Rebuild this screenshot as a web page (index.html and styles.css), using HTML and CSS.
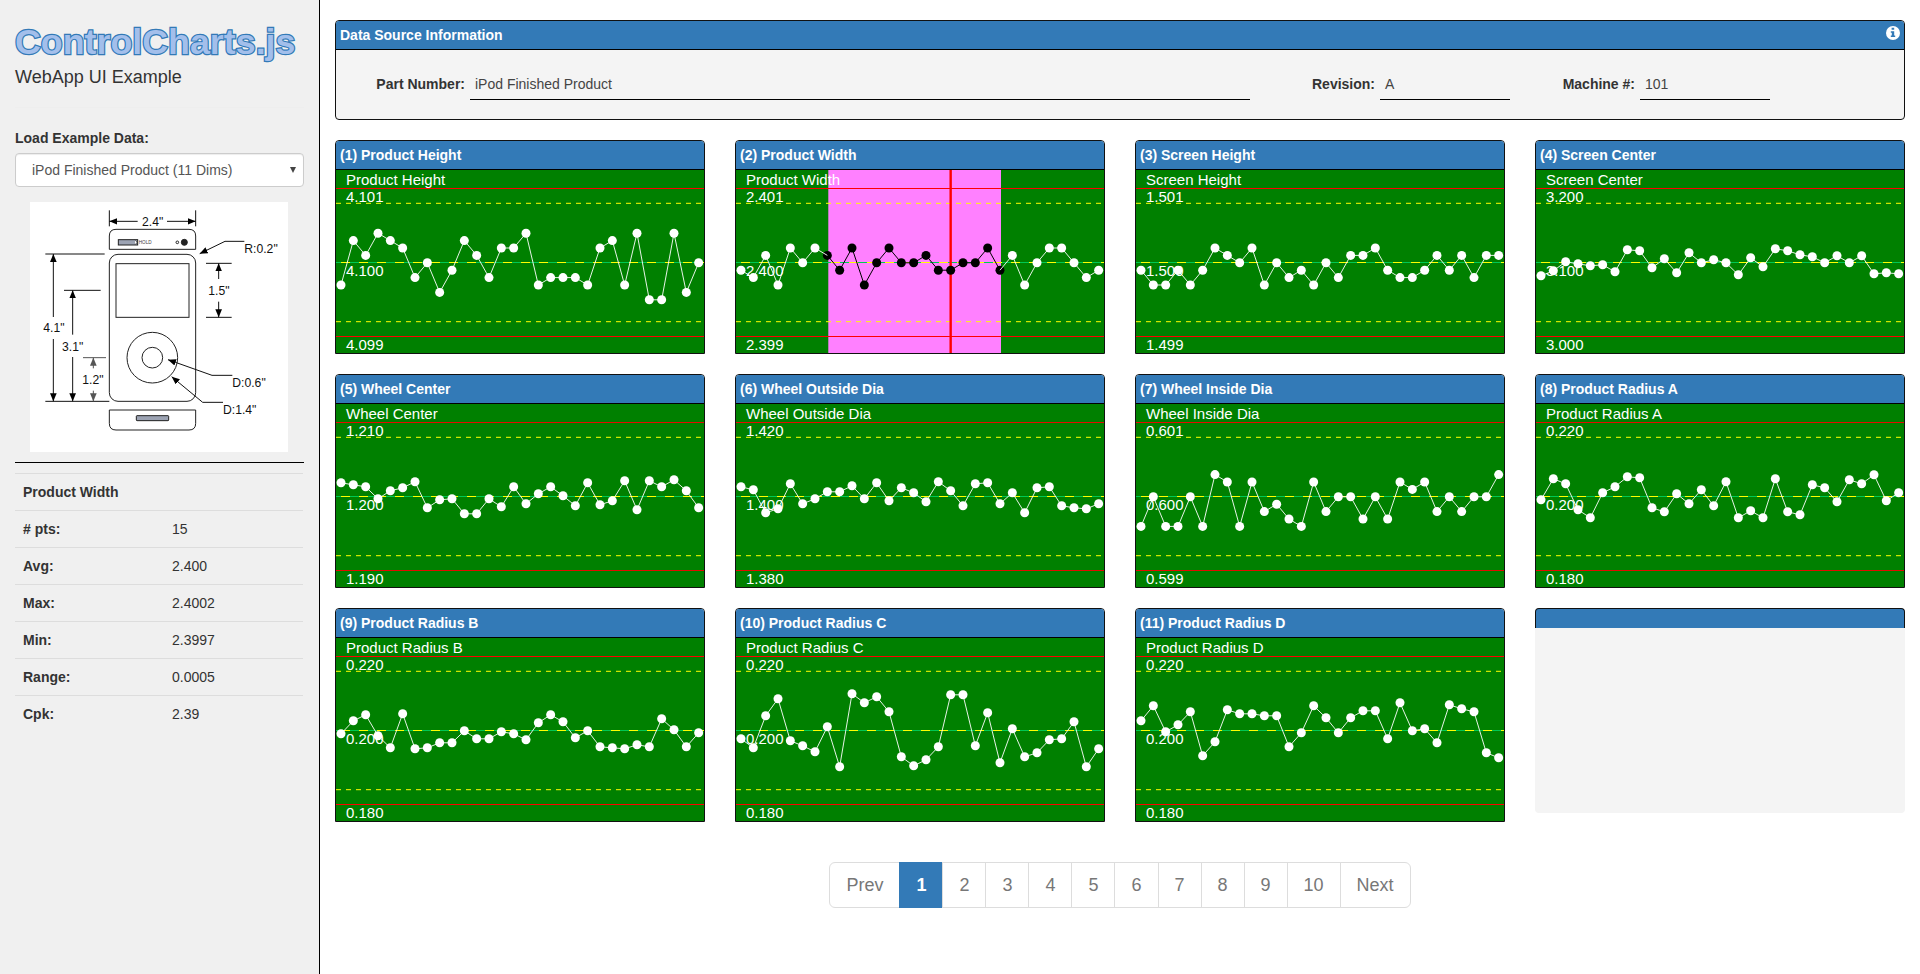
FILE: index.html
```html
<!DOCTYPE html>
<html lang="en">
<head>
<meta charset="utf-8">
<title>ControlCharts.js</title>
<link rel="stylesheet" href="styles.css">
</head>
<body>
<div class="app">
  <aside class="sidebar">
    <h1 class="logo">ControlCharts.js</h1>
    <div class="subtitle">WebApp UI Example</div>
    <hr class="divider">
    <label class="field-label">Load Example Data:</label>
    <div class="select"><span>iPod Finished Product (11 Dims)</span>
      <svg class="caret" viewBox="0 0 6 6"><path d="M0 0H6L3 6Z"/></svg>
    </div>
    <svg class="drawing" viewBox="90 36 774 750">
      <defs>
        <marker id="arrow" viewBox="0 0 24 20" refX="24" refY="10" markerWidth="24" markerHeight="20" markerUnits="userSpaceOnUse" orient="auto-start-reverse"><path d="M24 10L0 0V20Z"/></marker>
        <marker id="arrow-gray" viewBox="0 0 24 20" refX="24" refY="10" markerWidth="24" markerHeight="20" markerUnits="userSpaceOnUse" orient="auto-start-reverse"><path d="M24 10L0 0V20Z" fill="#555"/></marker>
      </defs>
      <rect x="90" y="36" width="774" height="750" fill="#fff"/>
      <g class="outline">
        <path d="M328 178V138Q328 118 348 118H567Q587 118 587 138V178Z"/>
        <rect x="328" y="193" width="259" height="441" rx="26"/>
        <rect x="348" y="221" width="219" height="161"/>
        <circle cx="457" cy="503" r="76"/>
        <circle cx="457" cy="503" r="31"/>
        <path d="M328 660H587V700Q587 720 567 720H348Q328 720 328 700Z"/>
        <rect x="355" y="149" width="58" height="16" fill="#9ca3b3"/>
        <path d="M405 149L411 157L405 165" stroke-width="2"/>
        <rect x="409" y="677" width="97" height="15" rx="2" fill="#9ca3b3"/>
        <circle cx="532" cy="157" r="4"/>
        <circle cx="553" cy="157" r="9" fill="#222"/>
      </g>
      <g class="dims">
        <path d="M328 61V109M587 61V109M136 192H314M192 301H302M136 634H328M618 220H695M618 382H695"/>
        <path d="M413 94H328" marker-end="url(#arrow)"/>
        <path d="M501 94H587" marker-end="url(#arrow)"/>
        <path d="M160 381V192" marker-end="url(#arrow)"/>
        <path d="M160 447V634" marker-end="url(#arrow)"/>
        <path d="M218 434V301" marker-end="url(#arrow)"/>
        <path d="M218 501V634" marker-end="url(#arrow)"/>
        <path d="M656 267V220" marker-end="url(#arrow)"/>
        <path d="M656 335V382" marker-end="url(#arrow)"/>
        <path d="M733 154H675L599 191" marker-end="url(#arrow)"/>
        <path d="M697 556H636L504 509" marker-end="url(#arrow)"/>
        <path d="M669 637H608L515 560" marker-end="url(#arrow)"/>
      </g>
      <g class="dims dims-gray">
        <path d="M249 503H318"/>
        <path d="M280 535V503" marker-end="url(#arrow-gray)"/>
        <path d="M280 602V634" marker-end="url(#arrow-gray)"/>
      </g>
      <g class="dim-text">
        <text x="426" y="108">2.4"</text>
        <text x="733" y="189">R:0.2"</text>
        <text x="625" y="315">1.5"</text>
        <text x="130" y="426">4.1"</text>
        <text x="186" y="483">3.1"</text>
        <text x="247" y="581">1.2"</text>
        <text x="697" y="590">D:0.6"</text>
        <text x="669" y="672">D:1.4"</text>
        <text x="416" y="163" class="hold">HOLD</text>
      </g>
    </svg>
    <div class="rule"></div>
    <table class="stats">
      <colgroup><col class="stat-name"><col></colgroup>
      <tr><th colspan="2">Product Width</th></tr>
      <tr><th># pts:</th><td>15</td></tr>
      <tr><th>Avg:</th><td>2.400</td></tr>
      <tr><th>Max:</th><td>2.4002</td></tr>
      <tr><th>Min:</th><td>2.3997</td></tr>
      <tr><th>Range:</th><td>0.0005</td></tr>
      <tr><th>Cpk:</th><td>2.39</td></tr>
    </table>
  </aside>
  <main class="main">
    <section class="panel">
      <header class="panel-head"><span>Data Source Information</span>
        <svg class="info" viewBox="0 0 14 14"><circle cx="7" cy="7" r="7" fill="#fff"/><path d="M5.6 1.8h2.6v2H5.6zM4.8 5.2h3.4v4.2h1v1.6H4.8V9.4h1V6.7h-1z" fill="#337ab7"/></svg>
      </header>
      <div class="source">
        <div class="pair pair-part"><b>Part Number:</b><span class="value">iPod Finished Product</span></div>
        <div class="pair pair-revision"><b>Revision:</b><span class="value">A</span></div>
        <div class="pair pair-machine"><b>Machine #:</b><span class="value">101</span></div>
      </div>
    </section>
    <div class="charts" id="charts"></div>
    <nav class="pager">
      <a>Prev</a><a class="active">1</a><a>2</a><a>3</a><a>4</a><a>5</a><a>6</a><a>7</a><a>8</a><a>9</a><a>10</a><a>Next</a>
    </nav>
  </main>
</div>
<script src="charts.js"></script>
</body>
</html>
```

FILE: styles.css
```css
* { box-sizing: border-box; }
body {
  margin: 0;
  font: 14px/20px "Liberation Sans", Arial, sans-serif;
  color: #333;
  background: #fff;
}
.app { display: flex; height: 974px; overflow: hidden; }
.sidebar {
  width: 320px;
  flex: none;
  padding: 22px 15px 0;
  background: #f0f0f0;
  border-right: 1px solid #000;
}
.logo {
  margin: 0;
  font-size: 35.8px;
  line-height: 40px;
  font-weight: bold;
  color: #a3bfeb;
  -webkit-text-stroke: 2.4px #337ab7;
  paint-order: stroke fill;
  text-shadow: 0 0 1px #337ab7;
  white-space: nowrap;
}
.subtitle { margin-top: 5px; font-size: 18px; line-height: 20px; }
.divider { margin: 20px 0; border: 0; border-top: 1px solid #eee; }
.field-label { display: block; margin-bottom: 5px; font-weight: bold; }
.select {
  display: flex;
  align-items: center;
  justify-content: space-between;
  height: 34px;
  padding: 0 7px 0 16px;
  border: 1px solid #ccc;
  border-radius: 4px;
  background: #fff;
  color: #555;
  box-shadow: inset 0 1px 1px rgba(0, 0, 0, .075);
}
.caret { width: 6px; height: 6px; fill: #444; }
.drawing { display: block; width: 258px; height: 250px; margin: 15px 0 0 15px; }
.outline { fill: #fff; stroke: #222; stroke-width: 3; }
.dims { fill: none; stroke: #111; stroke-width: 3; }
.dims-gray { stroke: #555; }
.dim-text { font-size: 36.5px; fill: #111; }
.hold { font-size: 14px; fill: #444; }
.rule { margin-top: 10px; border-top: 1px solid #000; }
.stats { width: 288px; margin-top: 10px; border-collapse: collapse; table-layout: fixed; }
.stats th, .stats td { height: 37px; padding: 8px; border-top: 1px solid #ddd; text-align: left; line-height: 20px; }
.stat-name { width: 149px; }
.main { flex: 1; padding: 20px 15px 0; }
.panel { border: 1px solid #111; border-radius: 4px; overflow: hidden; background: #f4f4f4; }
.panel-head {
  display: flex;
  justify-content: space-between;
  height: 29px;
  padding: 4px;
  border-bottom: 1px solid #000;
  background: #337ab7;
  color: #fff;
  font-weight: bold;
}
.info { width: 14px; height: 14px; margin-top: 1px; }
.source { display: flex; height: 69px; padding: 17px 0 0 40px; }
.pair { display: flex; gap: 5px; line-height: 34px; height: 33px; }
.pair b { flex: none; text-align: right; }
.value { flex: 1; padding-left: 5px; color: #444; border-bottom: 1px solid #000; }
.pair-part { width: 874px; }
.pair-revision { width: 200px; margin-left: 60px; }
.pair-machine { width: 210px; margin-left: 50px; }
.pair-part b { width: 89px; }
.pair-revision b { width: 65px; }
.pair-machine b { width: 75px; }
.charts {
  display: grid;
  grid-template-columns: repeat(4, 370px);
  gap: 20px 30px;
  margin-top: 20px;
}
.charts .panel { height: 214px; border-radius: 4px 4px 0 0; }
.chart { display: block; width: 368px; height: 183px; background: #008000; }
.limit { stroke: #f00; stroke-width: 1.1; }
.limit-soft { stroke: #e60a00; stroke-width: 1; }
.warn { stroke: #ff0; stroke-dasharray: 5 5; }
.mean { stroke: #00c853; }
.mean-dash { stroke: #ff0; stroke-dasharray: 9 9; }
.label { fill: #fff; font-size: 15px; }
.trace { fill: none; stroke: #fff; stroke-opacity: .9; }
.dot { fill: #fff; }
.trace-selected { fill: none; stroke: #000; }
.dot-selected { fill: #000; }
.selection { fill: #ff80ff; }
.cursor { stroke: #f00; stroke-width: 2.4; }
.empty-head {
  height: 20px;
  border: 1px solid #111;
  border-bottom: 0;
  border-radius: 4px 4px 0 0;
  background: #337ab7;
}
.empty-body { height: 185px; border-radius: 0 0 4px 4px; background: #f4f4f4; }
.pager { display: flex; width: max-content; margin: 40px auto 0; font-size: 18px; line-height: 24px; color: #777; }
.pager a { padding: 10px 16px; border: 1px solid #ddd; margin-left: -1px; background: #fff; }
.pager a:first-child { margin-left: 0; border-radius: 6px 0 0 6px; }
.pager a:last-child { border-radius: 0 6px 6px 0; }
.pager .active { border-color: #337ab7; background: #337ab7; color: #fff; font-weight: bold; }
```

FILE: charts.js
```js
// Each chart: name, axis labels (upper, target, lower), pixels per step, offsets from target in steps.
const COARSE = 7.4, FINE = 1 / 3;
const charts = [
  ["Product Height", ["4.101", "4.100", "4.099"], COARSE, [-3,3,1,4,3,2,-2,0,-4,-1,3,1,-2,2,2,4,-3,-2,-2,-2,-3,2,3,-3,4,-5,-5,4,-4,0]],
  ["Product Width", ["2.401", "2.400", "2.399"], COARSE, [-1,-2,1,-3,2,0,2,1,-1,2,-3,0,2,0,0,1,-1,-1,0,0,2,-1,1,-3,0,2,2,0,-2,-1], [7, 21, 17]],
  ["Screen Height", ["1.501", "1.500", "1.499"], COARSE, [-1,-3,-3,-1,-3,-1,2,1,0,2,-3,0,-2,-1,-3,0,-2,1,1,2,-1,-2,-2,-1,1,-1,1,-2,1,1]],
  ["Screen Center", ["3.200", "3.100", "3.000"], FINE, [-39,-24,3,-3,-9,-6,-27,39,36,-15,12,-30,30,0,9,0,-36,15,-12,42,36,24,18,0,21,0,21,-33,-30,-33]],
  ["Wheel Center", ["1.210", "1.200", "1.190"], FINE, [42,36,30,-6,18,27,45,-33,-9,-6,-51,-51,-6,-30,30,-21,9,30,3,-27,42,-24,-12,48,-39,48,30,51,18,-33]],
  ["Wheel Outside Dia", ["1.420", "1.400", "1.380"], FINE, [30,21,-48,-36,39,-21,-6,15,15,33,-6,42,-12,27,12,-15,45,18,-27,39,42,-21,12,-48,27,30,-27,-33,-36,-21]],
  ["Wheel Inside Dia", ["0.601", "0.600", "0.599"], COARSE, [-4,0,-4,-4,0,-4,3,2,-4,2,-2,-1,-3,-4,2,-2,0,0,-3,0,-3,2,1,2,-2,0,-2,0,0,3]],
  ["Product Radius A", ["0.220", "0.200", "0.180"], FINE, [-9,54,39,-39,-63,12,30,60,57,-33,-45,9,-21,21,-27,45,-63,-42,-63,54,-45,-54,36,27,-15,51,39,66,-12,12]],
  ["Product Radius B", ["0.220", "0.200", "0.180"], FINE, [-9,30,48,-15,-51,51,-54,-51,-36,-36,0,-24,-24,-3,-9,-27,24,48,27,-21,0,-48,-51,-54,-42,-48,36,3,-48,-6]],
  ["Product Radius C", ["0.220", "0.200", "0.180"], FINE, [-24,-51,45,96,-30,-45,-63,12,-108,111,84,102,57,-78,-105,-87,-48,108,108,-45,54,-96,6,-78,-66,-27,-24,27,-108,-54]],
  ["Product Radius D", ["0.220", "0.200", "0.180"], FINE, [30,75,-3,18,57,-75,-33,63,51,51,45,45,-48,-6,75,39,-6,39,60,60,-24,84,0,6,-36,78,66,57,-66,-81]]
];

const hline = (y, cls) => `<line class="${cls}" x1="0" x2="368" y1="${y}" y2="${y}"/>`;
const path = (pts, cls) => pts.length ? `<polyline class="${cls}" points="${pts.map(p => p.join()).join(" ")}"/>` : "";
const dots = (pts, cls) => pts.map(p => `<circle class="${cls}" cx="${p[0]}" cy="${p[1]}" r="4.5"/>`).join("");

function draw([name, labels, step, values, range], index) {
  const pts = values.map((v, i) => [+(5 + i * 12.333).toFixed(2), +(92.8 - v * step).toFixed(2)]);
  const limit = index > 3 && index < 8 ? "limit limit-soft" : "limit";
  let body = "";
  if (range) body += `<rect class="selection" x="92.3" y="0" width="172.7" height="183"/>`;
  body += hline(18.5, limit) + hline(166.5, limit) + hline(33.3, "warn") + hline(151.7, "warn");
  body += hline(92.5, "mean") + `<line class="mean-dash" x1="5" x2="368" y1="92.5" y2="92.5"/>`;
  body += `<text class="label" x="10" y="15">${name}</text>`;
  labels.forEach((t, i) => { body += `<text class="label" x="10" y="${32 + 74 * i}">${t}</text>`; });
  if (range) {
    const [a, b, c] = range, sel = pts.slice(a, b + 1);
    const x = pts[c][0];
    body += `<line class="cursor" x1="${x}" x2="${x}" y1="0" y2="183"/>`;
    body += path(sel, "trace-selected") + dots(sel, "dot-selected");
    body += path(pts.slice(0, a + 1), "trace") + path(pts.slice(b), "trace");
    body += dots(pts.slice(0, a), "dot") + dots(pts.slice(b + 1), "dot");
  } else {
    body += path(pts, "trace") + dots(pts, "dot");
  }
  return `<section class="panel"><header class="panel-head">(${index + 1}) ${name}</header><svg class="chart" viewBox="0 0 368 183">${body}</svg></section>`;
}

document.getElementById("charts").innerHTML =
  charts.map(draw).join("") + '<section><div class="empty-head"></div><div class="empty-body"></div></section>';
```
